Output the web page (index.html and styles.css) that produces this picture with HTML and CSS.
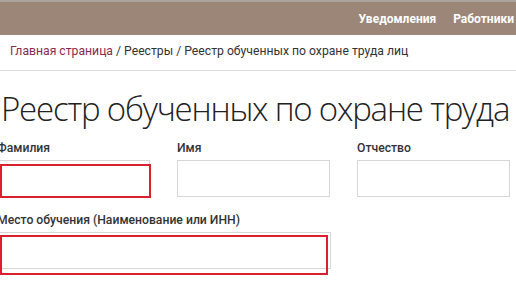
FILE: index.html
```html
<!DOCTYPE html>
<html lang="ru">
<head>
    <meta charset="UTF-8">
    <meta name="viewport" content="width=device-width, initial-scale=1.0">
    <title>Реестр обученных по охране труда лиц</title>
    <link rel="stylesheet" href="styles.css">
</head>
<body>
    <header class="topbar">
        <nav class="nav">
            <a href="#">Уведомления</a>
            <a href="#">Работники</a>
        </nav>
    </header>

    <div class="crumbs">
        <a href="#">Главная страница</a> / Реестры / Реестр обученных по охране труда лиц
    </div>

    <h1 class="title">Реестр обученных по охране труда лиц</h1>

    <form class="search">
        <div class="row">
            <div class="field">
                <label>Фамилия</label>
                <div class="box">
                    <input type="text">
                    <span class="mark mark-name"></span>
                </div>
            </div>
            <div class="field">
                <label>Имя</label>
                <div class="box"><input type="text"></div>
            </div>
            <div class="field">
                <label>Отчество</label>
                <div class="box"><input type="text"></div>
            </div>
        </div>
        <div class="row">
            <div class="field wide">
                <label>Место обучения (Наименование или ИНН)</label>
                <div class="box">
                    <input type="text">
                    <span class="mark mark-place"></span>
                </div>
            </div>
        </div>
    </form>
</body>
</html>
```

FILE: styles.css
```css
body {
    margin: 0;
    font-family: Roboto, Arial, sans-serif;
    color: #333;
    background: #fff;
    overflow: hidden;
}
.topbar {
    height: 35px;
    background: #9c8678;
    border-top: 2px solid #aaa29c;
    box-sizing: border-box;
}
.nav {
    display: flex;
    justify-content: flex-end;
    gap: 17px;
    height: 100%;
    align-items: center;
    padding-right: 2px;
}
.nav a {
    color: #fff;
    text-decoration: none;
    font-weight: 700;
    font-size: 12px;
}
.crumbs {
    padding: 9px 10px 0;
    height: 36px;
    box-sizing: border-box;
    border-bottom: 1px solid #ddd;
    font-size: 12.2px;
    color: #333;
    white-space: nowrap;
}
.crumbs a {
    color: #8a2a4c;
    text-decoration: none;
}
.title {
    margin: 15px 0 0 1px;
    font-family: "Open Sans", Arial, sans-serif;
    font-weight: 300;
    font-size: 33px;
    letter-spacing: -1.2px;
    line-height: 46px;
    white-space: nowrap;
    color: #222;
}
.search {
    margin: 9px 0 0 -3px;
}
.row {
    display: flex;
    gap: 27px;
    margin-bottom: 16px;
}
.field {
    width: 153px;
}
.field.wide {
    width: 334px;
}
.field label {
    display: block;
    font-size: 12.2px;
    font-weight: 500;
    color: #333;
    margin-bottom: 5px;
}
.box {
    position: relative;
}
.box input {
    display: block;
    width: 100%;
    height: 37px;
    box-sizing: border-box;
    border: 1px solid #d6d6d6;
    background: #fff;
}
.mark {
    position: absolute;
    border: 2px solid #dc1f2e;
}
.mark-name {
    top: 4px;
    left: 3px;
    right: -1px;
    bottom: -1px;
}
.mark-place {
    top: 3px;
    left: 3px;
    right: 3px;
    bottom: -6px;
}
```
